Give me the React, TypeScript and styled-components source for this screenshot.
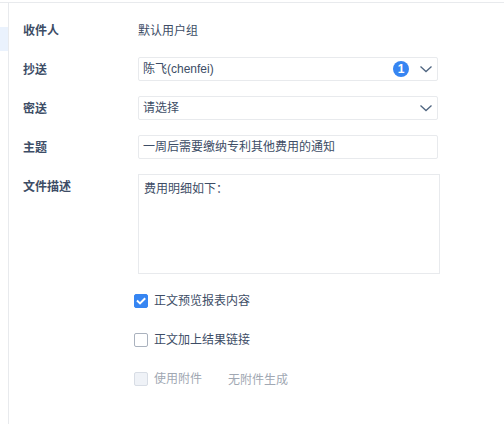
import React, { useState } from "react";
import styled, { createGlobalStyle } from "styled-components";

const ink = "#3d4d66";
const line = "#e8eaed";
const accent = "#3685f2";

const GlobalStyle = createGlobalStyle`
  *, *::before, *::after { box-sizing: border-box; }
  body {
    margin: 0;
    background: #fff;
    color: ${ink};
    font: 12px/24px "Liberation Sans", "Noto Sans CJK SC", sans-serif;
  }
  input, select, textarea { font: inherit; color: inherit; }
`;

const Page = styled.div`
  display: flex;
  flex-direction: column;
  min-height: 100vh;
  padding-top: 2px;
`;

const Body = styled.div`
  display: flex;
  flex: 1;
  border-top: 1px solid ${line};
`;

const Sidebar = styled.nav`
  flex: 0 0 9px;
  padding-top: 24px;
  border-right: 1px solid ${line};
`;

const ActiveItem = styled.div`
  height: 24px;
  background: #eaf2fd;
`;

const Form = styled.form`
  display: flex;
  flex: 1;
  flex-direction: column;
  gap: 15px;
  min-width: 0;
  padding: 15px 64px 24px 14px;
`;

const Row = styled.div`
  display: grid;
  grid-template-columns: 115px minmax(0, 1fr);
  min-height: 24px;
`;

const Label = styled.label`
  height: 24px;
  font-weight: 700;
  line-height: 26px;
`;

const Value = styled.span`
  height: 24px;
  line-height: 26px;
`;

const Control = styled.div`
  position: relative;
  margin-right: 2px;
`;

const fieldBox = `
  display: block;
  width: 100%;
  margin: 0;
  border: 1px solid ${line};
  background: #fff;
  outline: none;
`;

const TextInput = styled.input`
  ${fieldBox}
  height: 24px;
  padding: 0 4px;
  border-radius: 2px;
`;

const Select = styled.select`
  ${fieldBox}
  height: 24px;
  padding: 0 52px 0 4px;
  border-radius: 2px;
  line-height: 22px;
  appearance: none;
`;

const TextArea = styled.textarea`
  ${fieldBox}
  height: 100px;
  padding: 5px;
  line-height: 18px;
  resize: none;
`;

const Adornments = styled.div`
  position: absolute;
  inset: 0 5px 0 auto;
  display: flex;
  align-items: center;
  gap: 10px;
  pointer-events: none;
`;

const Badge = styled.span`
  width: 16px;
  height: 16px;
  border-radius: 50%;
  background: ${accent};
  color: #fff;
  font-weight: 700;
  line-height: 16px;
  text-align: center;
`;

const CheckRow = styled.div`
  display: flex;
  gap: 26px;
  padding-left: 111px;
`;

const CheckLabel = styled.label<{ $muted?: boolean }>`
  display: flex;
  align-items: center;
  gap: 6px;
  color: ${(p) => (p.$muted ? "#a1a8b3" : ink)};
`;

const Muted = styled.span`
  height: 24px;
  color: #a1a8b3;
  line-height: 26px;
`;

const BoxHolder = styled.span`
  position: relative;
  display: flex;
`;

const CheckBox = styled.input`
  width: 14px;
  height: 14px;
  margin: 0;
  border: 1px solid #aab2be;
  border-radius: 2px;
  background: #fff;
  appearance: none;

  &:checked { border-color: ${accent}; background: ${accent}; }
  &:disabled { border-color: #d8dde5; background: #eff2f7; }
`;

const Tick = styled.svg`
  position: absolute;
  inset: 0;
  pointer-events: none;
`;

const Chevron = () => (
  <svg width="14" height="8" viewBox="0 0 14 8" fill="none" aria-hidden="true">
    <path d="M1.5 1.5 L7 6.5 L12.5 1.5" stroke="#4f6580" strokeWidth="1.3" />
  </svg>
);

type CheckProps = { label: string; initial?: boolean; disabled?: boolean };

const Check = ({ label, initial = false, disabled }: CheckProps) => {
  const [on, setOn] = useState(initial);
  return (
    <CheckLabel $muted={disabled}>
      <BoxHolder>
        <CheckBox
          type="checkbox"
          checked={on}
          disabled={disabled}
          onChange={(e) => setOn(e.target.checked)}
        />
        {on && (
          <Tick width="14" height="14" viewBox="0 0 14 14" fill="none" aria-hidden="true">
            <path d="M3 6.6 L6 9.4 L11.2 4.2" stroke="#fff" strokeWidth="2" />
          </Tick>
        )}
      </BoxHolder>
      {label}
    </CheckLabel>
  );
};

export default function App() {
  return (
    <>
      <GlobalStyle />
      <Page>
        <Body>
          <Sidebar>
            <ActiveItem />
          </Sidebar>
          <Form>
            <Row>
              <Label as="span">收件人</Label>
              <Value>默认用户组</Value>
            </Row>
            <Row>
              <Label htmlFor="cc">抄送</Label>
              <Control>
                <Select id="cc">
                  <option>陈飞(chenfei)</option>
                </Select>
                <Adornments>
                  <Badge>1</Badge>
                  <Chevron />
                </Adornments>
              </Control>
            </Row>
            <Row>
              <Label htmlFor="bcc">密送</Label>
              <Control>
                <Select id="bcc">
                  <option>请选择</option>
                </Select>
                <Adornments>
                  <Chevron />
                </Adornments>
              </Control>
            </Row>
            <Row>
              <Label htmlFor="subject">主题</Label>
              <Control>
                <TextInput id="subject" defaultValue="一周后需要缴纳专利其他费用的通知" />
              </Control>
            </Row>
            <Row>
              <Label htmlFor="description">文件描述</Label>
              <TextArea id="description" defaultValue="费用明细如下：" />
            </Row>
            <CheckRow>
              <Check label="正文预览报表内容" initial />
            </CheckRow>
            <CheckRow>
              <Check label="正文加上结果链接" />
            </CheckRow>
            <CheckRow>
              <Check label="使用附件" disabled />
              <Muted>无附件生成</Muted>
            </CheckRow>
          </Form>
        </Body>
      </Page>
    </>
  );
}
